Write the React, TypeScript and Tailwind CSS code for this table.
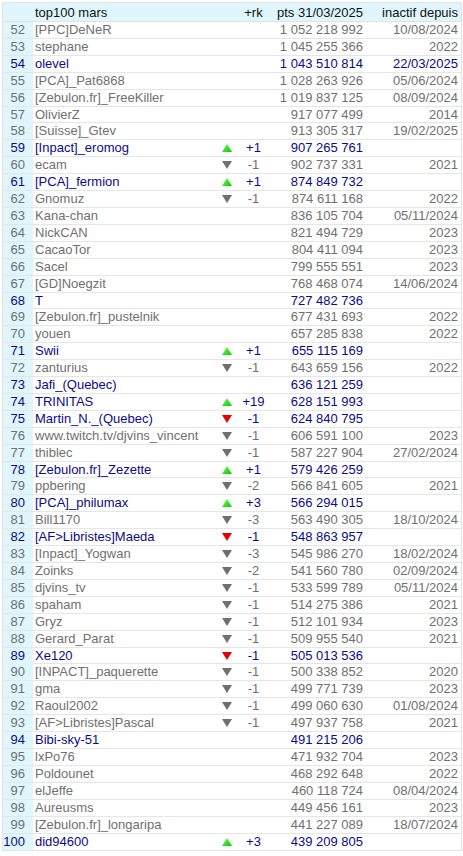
type Row = [number, string, boolean, "" | "up" | "down" | "red", string, string, string];

// rank, name, active (blue), arrow, +rk, pts, inactif
const rows: Row[] = [
  [52, "[PPC]DeNeR", false, "", "", "1 052 218 992", "10/08/2024"],
  [53, "stephane", false, "", "", "1 045 255 366", "2022"],
  [54, "olevel", true, "", "", "1 043 510 814", "22/03/2025"],
  [55, "[PCA]_Pat6868", false, "", "", "1 028 263 926", "05/06/2024"],
  [56, "[Zebulon.fr]_FreeKiller", false, "", "", "1 019 837 125", "08/09/2024"],
  [57, "OlivierZ", false, "", "", "917 077 499", "2014"],
  [58, "[Suisse]_Gtev", false, "", "", "913 305 317", "19/02/2025"],
  [59, "[Inpact]_eromog", true, "up", "+1", "907 265 761", ""],
  [60, "ecam", false, "down", "-1", "902 737 331", "2021"],
  [61, "[PCA]_fermion", true, "up", "+1", "874 849 732", ""],
  [62, "Gnomuz", false, "down", "-1", "874 611 168", "2022"],
  [63, "Kana-chan", false, "", "", "836 105 704", "05/11/2024"],
  [64, "NickCAN", false, "", "", "821 494 729", "2023"],
  [65, "CacaoTor", false, "", "", "804 411 094", "2023"],
  [66, "Sacel", false, "", "", "799 555 551", "2023"],
  [67, "[GD]Noegzit", false, "", "", "768 468 074", "14/06/2024"],
  [68, "T", true, "", "", "727 482 736", ""],
  [69, "[Zebulon.fr]_pustelnik", false, "", "", "677 431 693", "2022"],
  [70, "youen", false, "", "", "657 285 838", "2022"],
  [71, "Swii", true, "up", "+1", "655 115 169", ""],
  [72, "zanturius", false, "down", "-1", "643 659 156", "2022"],
  [73, "Jafi_(Quebec)", true, "", "", "636 121 259", ""],
  [74, "TRINITAS", true, "up", "+19", "628 151 993", ""],
  [75, "Martin_N._(Quebec)", true, "red", "-1", "624 840 795", ""],
  [76, "www.twitch.tv/djvins_vincent", false, "down", "-1", "606 591 100", "2023"],
  [77, "thiblec", false, "down", "-1", "587 227 904", "27/02/2024"],
  [78, "[Zebulon.fr]_Zezette", true, "up", "+1", "579 426 259", ""],
  [79, "ppbering", false, "down", "-2", "566 841 605", "2021"],
  [80, "[PCA]_philumax", true, "up", "+3", "566 294 015", ""],
  [81, "Bill1170", false, "down", "-3", "563 490 305", "18/10/2024"],
  [82, "[AF>Libristes]Maeda", true, "red", "-1", "548 863 957", ""],
  [83, "[Inpact]_Yogwan", false, "down", "-3", "545 986 270", "18/02/2024"],
  [84, "Zoinks", false, "down", "-2", "541 560 780", "02/09/2024"],
  [85, "djvins_tv", false, "down", "-1", "533 599 789", "05/11/2024"],
  [86, "spaham", false, "down", "-1", "514 275 386", "2021"],
  [87, "Gryz", false, "down", "-1", "512 101 934", "2023"],
  [88, "Gerard_Parat", false, "down", "-1", "509 955 540", "2021"],
  [89, "Xe120", true, "red", "-1", "505 013 536", ""],
  [90, "[INPACT]_paquerette", false, "down", "-1", "500 338 852", "2020"],
  [91, "gma", false, "down", "-1", "499 771 739", "2023"],
  [92, "Raoul2002", false, "down", "-1", "499 060 630", "01/08/2024"],
  [93, "[AF>Libristes]Pascal", false, "down", "-1", "497 937 758", "2021"],
  [94, "Bibi-sky-51", true, "", "", "491 215 206", ""],
  [95, "lxPo76", false, "", "", "471 932 704", "2023"],
  [96, "Poldounet", false, "", "", "468 292 648", "2022"],
  [97, "elJeffe", false, "", "", "460 118 724", "08/04/2024"],
  [98, "Aureusms", false, "", "", "449 456 161", "2023"],
  [99, "[Zebulon.fr]_longaripa", false, "", "", "441 227 089", "18/07/2024"],
  [100, "did94600", true, "up", "+3", "439 209 805", ""],
];

const Arrow = ({ kind }: { kind: Row[3] }) => {
  if (!kind) return null;
  if (kind === "up")
    return (
      <svg width="10" height="8" viewBox="0 0 10 8">
        <defs>
          <linearGradient id="gup" x1="0" y1="0" x2="1" y2="1">
            <stop offset="0" stopColor="#7dff5a" />
            <stop offset="1" stopColor="#00c800" />
          </linearGradient>
        </defs>
        <polygon points="5,0 10,8 0,8" fill="url(#gup)" />
      </svg>
    );
  return (
    <svg width="10" height="8" viewBox="0 0 10 8">
      <polygon points="0,0 10,0 5,8" fill={kind === "red" ? "#e80000" : "#6f6f6f"} />
    </svg>
  );
};

const cols = "grid grid-cols-[30px_186px_16px_37px_94px_95px]";

export default function App() {
  return (
    <div className="bg-white min-h-[856px] pt-[2px] pl-[2px]" style={{ fontFamily: '"Liberation Sans", Arial, sans-serif' }}>
      <div className="w-[460px] border border-[#e2e2e2] text-[13px]">
        {/* header */}
        <div className={`${cols} h-[19px] items-center bg-[#dff6fd] text-[#111] border-b border-[#e2e2e2]`}>
          <span />
          <span className="pl-[2px]">top100 mars</span>
          <span />
          <span className="text-center">+rk</span>
          <span className="text-right pr-[3px] whitespace-nowrap">pts 31/03/2025</span>
          <span className="text-right pr-[3px] whitespace-nowrap">inactif depuis</span>
        </div>
        {rows.map(([rank, name, active, arrow, rk, pts, inact]) => (
          <div
            key={rank}
            className={`${cols} h-[16.92px] items-center leading-[16px] border-b border-[#e6e6e6] last:border-b-0 ${
              active ? "text-[#0a0a8a]" : "text-[#707070]"
            }`}
          >
            <span className="bg-[#dff6fd] h-full flex items-center justify-end pr-[8px]">{rank}</span>
            <span className="pl-[2px] whitespace-nowrap overflow-hidden">{name}</span>
            <span className="flex justify-center items-center">
              <Arrow kind={arrow} />
            </span>
            <span className="text-center">{rk}</span>
            <span className="text-right pr-[3px] whitespace-nowrap">{pts}</span>
            <span className="text-right pr-[3px] whitespace-nowrap">{inact}</span>
          </div>
        ))}
      </div>
    </div>
  );
}
